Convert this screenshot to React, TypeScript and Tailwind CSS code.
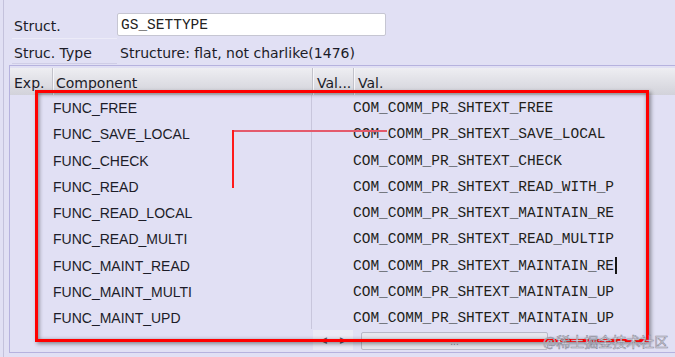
import React from "react";

const rows: [string, string][] = [
  ["FUNC_FREE", "COM_COMM_PR_SHTEXT_FREE"],
  ["FUNC_SAVE_LOCAL", "COM_COMM_PR_SHTEXT_SAVE_LOCAL"],
  ["FUNC_CHECK", "COM_COMM_PR_SHTEXT_CHECK"],
  ["FUNC_READ", "COM_COMM_PR_SHTEXT_READ_WITH_P"],
  ["FUNC_READ_LOCAL", "COM_COMM_PR_SHTEXT_MAINTAIN_RE"],
  ["FUNC_READ_MULTI", "COM_COMM_PR_SHTEXT_READ_MULTIP"],
  ["FUNC_MAINT_READ", "COM_COMM_PR_SHTEXT_MAINTAIN_RE"],
  ["FUNC_MAINT_MULTI", "COM_COMM_PR_SHTEXT_MAINTAIN_UP"],
  ["FUNC_MAINT_UPD", "COM_COMM_PR_SHTEXT_MAINTAIN_UP"],
];

const sans = "font-['Liberation_Sans',Arial,sans-serif]";
const dv = "font-['DejaVu_Sans',Verdana,sans-serif]";
const mono = "font-['Liberation_Mono','Courier_New',monospace]";

export default function App() {
  return (
    <div className={`relative w-[675px] h-[357px] overflow-hidden bg-[#e1e0f4] text-[14px] leading-[16px] text-[#1c1c28] ${sans}`}>
      <div className="ml-[3px] h-full border-l border-[#c4c2dc] flex flex-col">
        {/* form area */}
        <div className={`pt-[13px] pl-[8px] ${dv}`}>
          <div className="flex items-start h-[26px]">
            <div className="w-[105px] h-[26px] border-b border-[#ecebf8] pl-[2px] pt-[5px]">Struct.</div>
            <div className={`w-[269px] h-[23px] bg-white border border-[#c6c6d2] rounded-[2px] pl-[3px] flex items-center text-[14.5px] text-[#222] ${mono}`}>
              GS_SETTYPE
            </div>
          </div>
          <div className="flex items-start h-[25px]">
            <div className="w-[105px] h-[25px] border-b border-[#cfcde6] pl-[2px] pt-[6px]">Struc. Type</div>
            <div className="pl-[3px] pt-[6px]">Structure: flat, not charlike(1476)</div>
          </div>
        </div>

        {/* table */}
        <div className="mt-[1px] ml-[5px] h-[288px] border-t border-l border-b border-[#b6b2de] flex flex-col pt-[2px]">
          {/* header */}
          <div className={`flex h-[27px] bg-gradient-to-b from-[#eeeef2] to-[#d2d2da] ${dv}`}>
            <div className="w-[43px] pl-[4px] pt-[7px] border-r border-[#c2c2ca]">Exp.</div>
            <div className="w-[260px] pl-[2px] pt-[7px] border-l border-[#f6f6fa] border-r border-r-[#c2c2ca]">Component</div>
            <div className="w-[41px] pl-[3px] pt-[7px] border-l border-[#f6f6fa] border-r border-r-[#c2c2ca]">Val...</div>
            <div className="flex-1 pl-[3px] pt-[7px] border-l border-[#f6f6fa]">Val.</div>
          </div>
          {/* body */}
          <div className="h-[234px] overflow-hidden">
            {rows.map(([c, v], i) => (
              <div key={i} className="flex h-[26.25px] items-center">
                <div className="w-[43px] h-full" />
                <div className="w-[259px] h-full flex items-center border-r border-[#c8c6dc]">{c}</div>
                <div className="w-[41px] h-full" />
                <div className={`flex-1 h-full flex items-center text-[14.5px] text-[#221e1a] ${mono}`}>
                  {v}
                  {i === 6 && <span className="inline-block w-[2px] h-[17px] bg-[#151515] ml-[1px]" />}
                </div>
              </div>
            ))}
          </div>
          {/* scrollbar */}
          <div className="flex items-start h-[20px] mt-[1px]">
            <div className="w-[303px]" />
            <div className="w-[20px] h-[20px] bg-[#ebeaf5] flex items-center justify-center text-[9px] text-[#5c5c6c]">◀</div>
            <div className="w-[20px] h-[20px] bg-[#ebeaf5] flex items-center justify-center text-[9px] text-[#5c5c6c]">▶</div>
            <div className="ml-[8px] mt-[2px] w-[187px] h-[18px] rounded-[2px] border border-[#b8b8c8] bg-[#e6e6ee] flex items-center justify-center text-[10px] leading-[6px] text-[#8a8a98] pt-[2px]">
              ...
            </div>
          </div>
        </div>
      </div>

      {/* annotation overlays */}
      <div className="absolute left-[35px] top-[90px] w-[614px] h-[252px] border-[3px] border-[#ff0000] shadow-[2px_2px_4px_rgba(0,0,0,0.4),inset_1px_1px_4px_rgba(0,0,0,0.45)]" />
      <div className="absolute left-[232px] top-[130px] w-[155px] h-[2px] bg-[#e45a6c]" />
      <div className="absolute left-[232px] top-[130px] w-[2px] h-[58px] bg-[#ff1a1a]" />

      {/* watermark */}
      <div className="absolute left-[543px] top-[332px] whitespace-nowrap text-[14px] leading-[18px] text-[#f6f6fa] [-webkit-text-stroke:0.6px_#8c8c9c] font-['Noto_Sans_CJK_SC',sans-serif]">
        @稀土掘金技术社区
      </div>
    </div>
  );
}
